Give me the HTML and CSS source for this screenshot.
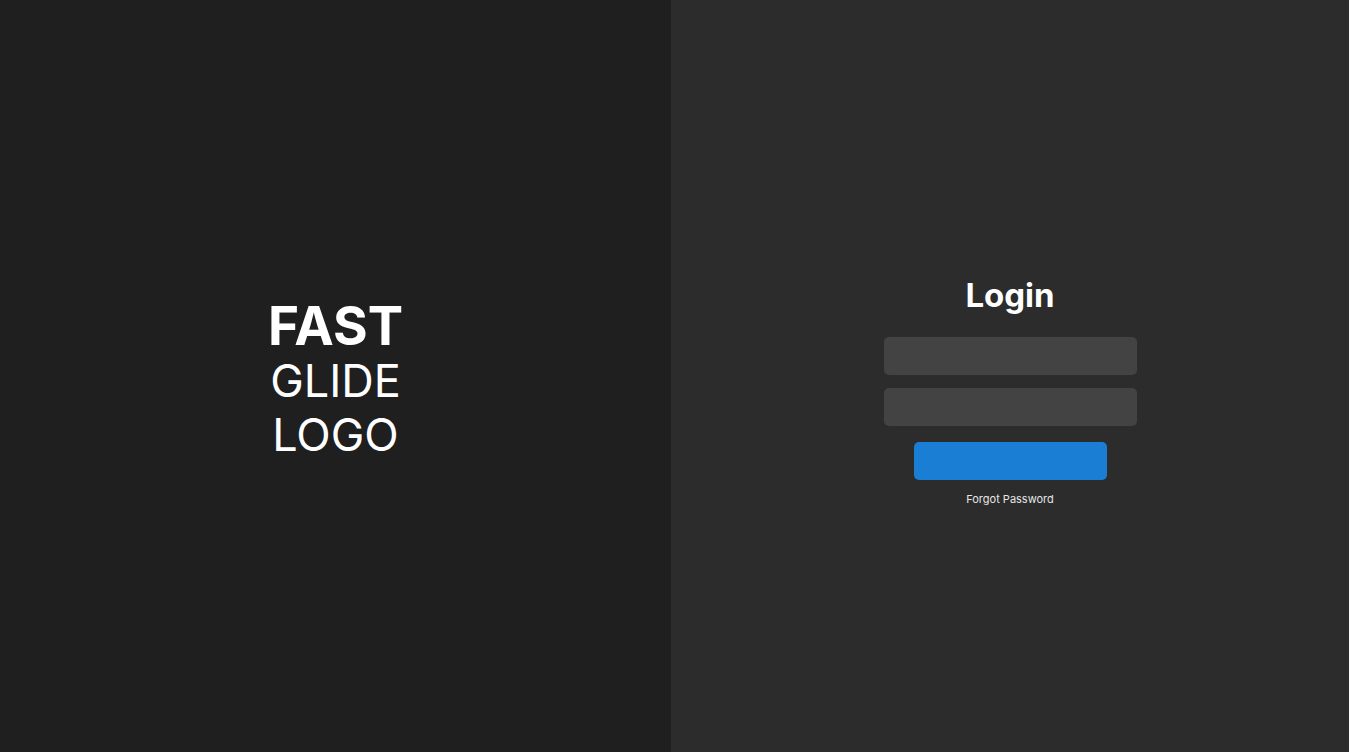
FILE: index.html
```html
<!DOCTYPE html>
<html lang="en">
<head>
<meta charset="utf-8">
<title>Login</title>
<link rel="stylesheet" href="styles.css">
</head>
<body>
<div class="page">
  <section class="brand">
    <div class="logo">
      <div class="logo-fast">FAST</div>
      <div class="logo-line">GLIDE</div>
      <div class="logo-line">LOGO</div>
    </div>
  </section>
  <section class="auth">
    <form class="login">
      <h1 class="title">Login</h1>
      <input class="field" type="text" aria-label="Username">
      <input class="field" type="password" aria-label="Password">
      <button class="submit" type="button"></button>
      <a class="forgot" href="#">Forgot Password</a>
    </form>
  </section>
</div>
</body>
</html>
```
FILE: styles.css
```css
* { box-sizing: border-box; }
html, body { margin: 0; height: 100%; }
body { font-family: Inter, "Noto Sans", sans-serif; color: #fff; }
.page { display: flex; height: 100vh; }
.brand {
  width: 671px;
  background: #1f1f1f;
  display: flex;
  align-items: center;
  justify-content: center;
}
.logo { text-align: center; margin-top: 8px; }
.logo-fast { font-weight: 700; font-size: 53px; line-height: 56px; }
.logo-line { font-weight: 400; font-size: 45px; line-height: 54px; }
.auth {
  flex: 1;
  background: #2c2c2c;
  display: flex;
  align-items: center;
  justify-content: center;
}
.login {
  display: flex;
  flex-direction: column;
  align-items: center;
  margin-top: 29px;
}
.title { margin: 0 0 22px; font-size: 33px; font-weight: 700; line-height: 40px; }
.field {
  width: 253px;
  height: 38px;
  border: none;
  border-radius: 5px;
  background: #434343;
  margin-bottom: 13px;
  padding: 0 10px;
  color: #fff;
  font: inherit;
}
.submit {
  margin-top: 3px;
  width: 193px;
  height: 38px;
  border: none;
  border-radius: 5px;
  background: #1a7fd4;
}
.forgot {
  margin-top: 12px;
  font-size: 11px;
  color: #e6e6e6;
  text-decoration: none;
}
```
